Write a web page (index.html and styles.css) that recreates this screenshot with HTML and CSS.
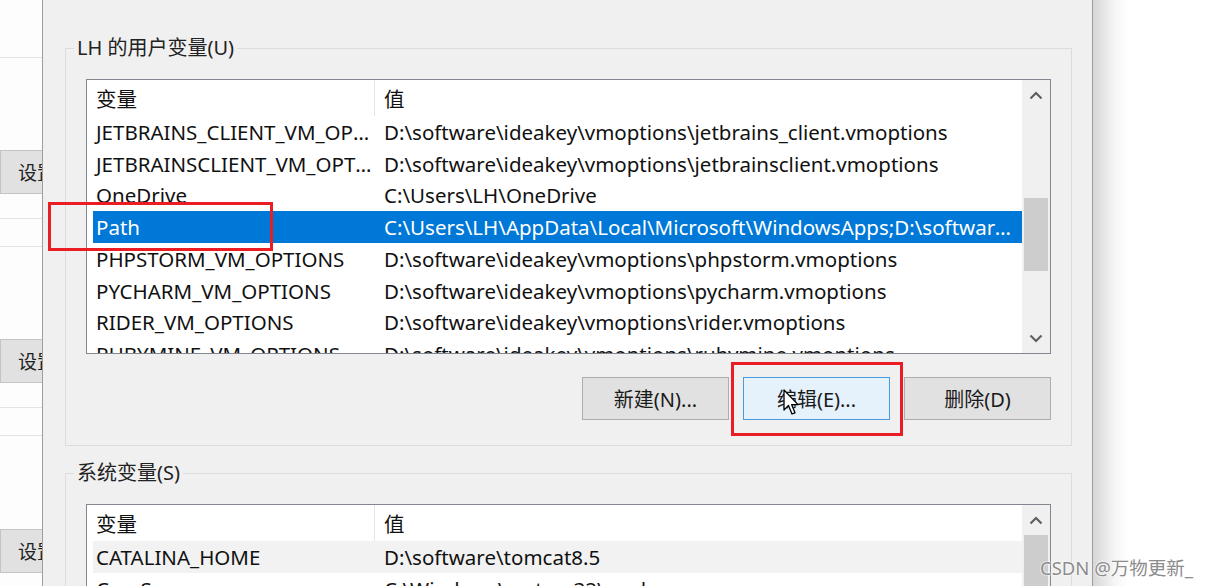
FILE: index.html
```html
<!DOCTYPE html>
<html lang="zh-CN">
<head>
    <meta charset="UTF-8">
    <title>环境变量</title>
    <link rel="stylesheet" href="styles.css">
</head>
<body>
<div class="screen">

    <div class="behind">
        <div class="rule r1"></div>
        <div class="bg_btn b1">设置</div>
        <div class="rule r2"></div>
        <div class="rule r3"></div>
        <div class="bg_btn b2">设置</div>
        <div class="rule r2"></div>
        <div class="rule r3"></div>
        <div class="bg_btn b3">设置</div>
    </div>

    <div class="dialog">
        <div class="group">
            <div class="group_title">LH 的用户变量(U)</div>
            <div class="list list_user">
                <div class="list_body">
                    <div class="row head">
                        <span class="col_name">变量</span>
                        <span class="col_val">值</span>
                    </div>
                    <div class="row">
                        <span class="col_name">JETBRAINS_CLIENT_VM_OPTIONS</span>
                        <span class="col_val">D:\software\ideakey\vmoptions\jetbrains_client.vmoptions</span>
                    </div>
                    <div class="row">
                        <span class="col_name">JETBRAINSCLIENT_VM_OPTIONS</span>
                        <span class="col_val">D:\software\ideakey\vmoptions\jetbrainsclient.vmoptions</span>
                    </div>
                    <div class="row">
                        <span class="col_name">OneDrive</span>
                        <span class="col_val">C:\Users\LH\OneDrive</span>
                    </div>
                    <div class="row selected">
                        <span class="col_name">Path</span>
                        <span class="col_val">C:\Users\LH\AppData\Local\Microsoft\WindowsApps;D:\software\Java\bin</span>
                    </div>
                    <div class="row">
                        <span class="col_name">PHPSTORM_VM_OPTIONS</span>
                        <span class="col_val">D:\software\ideakey\vmoptions\phpstorm.vmoptions</span>
                    </div>
                    <div class="row">
                        <span class="col_name">PYCHARM_VM_OPTIONS</span>
                        <span class="col_val">D:\software\ideakey\vmoptions\pycharm.vmoptions</span>
                    </div>
                    <div class="row">
                        <span class="col_name">RIDER_VM_OPTIONS</span>
                        <span class="col_val">D:\software\ideakey\vmoptions\rider.vmoptions</span>
                    </div>
                    <div class="row">
                        <span class="col_name">RUBYMINE_VM_OPTIONS</span>
                        <span class="col_val">D:\software\ideakey\vmoptions\rubymine.vmoptions</span>
                    </div>
                </div>
                <div class="scrollbar">
                    <div class="sb_btn">
                        <svg width="14" height="9" viewBox="0 0 14 9"><path d="M1.5 7.5 L7 2 L12.5 7.5" fill="none" stroke="#606060" stroke-width="2.2"/></svg>
                    </div>
                    <div class="sb_track">
                        <div class="thumb thumb_user"></div>
                    </div>
                    <div class="sb_btn">
                        <svg width="14" height="9" viewBox="0 0 14 9"><path d="M1.5 1.5 L7 7 L12.5 1.5" fill="none" stroke="#606060" stroke-width="2.2"/></svg>
                    </div>
                </div>
            </div>
            <div class="buttons">
                <div class="btn">新建(N)...</div>
                <div class="btn hover">编辑(E)...</div>
                <div class="btn">删除(D)</div>
            </div>
        </div>

        <div class="group group_sys">
            <div class="group_title">系统变量(S)</div>
            <div class="list list_sys">
                <div class="list_body">
                    <div class="row head">
                        <span class="col_name">变量</span>
                        <span class="col_val">值</span>
                    </div>
                    <div class="row soft">
                        <span class="col_name">CATALINA_HOME</span>
                        <span class="col_val">D:\software\tomcat8.5</span>
                    </div>
                    <div class="row">
                        <span class="col_name">ComSpec</span>
                        <span class="col_val">C:\Windows\system32\cmd.exe</span>
                    </div>
                </div>
                <div class="scrollbar">
                    <div class="sb_btn">
                        <svg width="14" height="9" viewBox="0 0 14 9"><path d="M1.5 7.5 L7 2 L12.5 7.5" fill="none" stroke="#606060" stroke-width="2.2"/></svg>
                    </div>
                    <div class="sb_track">
                        <div class="thumb thumb_sys"></div>
                    </div>
                </div>
            </div>
        </div>
    </div>

    <div class="shade"></div>
</div>

<!-- annotations drawn over the screenshot -->
<div class="mark mark_path"></div>
<div class="mark mark_edit"></div>
<svg class="cursor" width="18" height="28" viewBox="0 0 18 28">
    <path d="M1 1 L1 21 L5.5 16.5 L9 25 L12 23.8 L8.6 15.6 L15 15.6 Z" fill="#fff" stroke="#000" stroke-width="1.3" stroke-linejoin="round"/>
</svg>
<div class="watermark">CSDN @万物更新_</div>

</body>
</html>
```

FILE: styles.css
```css
* {
    margin: 0;
    padding: 0;
    box-sizing: border-box;
}
body {
    width: 1212px;
    height: 586px;
    overflow: hidden;
    background-color: #fff;
    font-family: "Noto Sans", "Noto Sans CJK SC", sans-serif;
    color: #111;
}
.screen {
    display: flex;
    height: 586px;
}

/* window behind the dialog */
.behind {
    width: 42px;
    flex-shrink: 0;
    overflow: hidden;
    background-color: #fdfdfd;
}
.rule {
    height: 1px;
    background-color: #e4e4e4;
}
.r1 { margin-top: 57px; }
.r2 { margin-top: 24px; }
.r3 { margin-top: 27px; }
.bg_btn {
    width: 70px;
    height: 44px;
    display: flex;
    align-items: center;
    padding-left: 17px;
    font-size: 19px;
    color: #222;
    background-color: #e1e1e1;
    border: 1px solid #c4c4c4;
}
.b1 { margin-top: 92px; }
.b2 { margin-top: 92px; }
.b3 { margin-top: 93px; }

/* dialog */
.dialog {
    width: 1051px;
    flex-shrink: 0;
    background-color: #f0f0f0;
    border-left: 1px solid #9e9e9e;
    border-right: 1px solid #9e9e9e;
    padding-left: 22px;
}
.group {
    width: 1007px;
    margin-top: 48px;
    border: 1px solid #dcdcdc;
    padding: 0 20px 25px 20px;
}
.group_sys {
    margin-top: 27px;
}
.group_title {
    width: fit-content;
    margin: -14px 0 0 -12px;
    padding: 0 3px;
    background-color: #f0f0f0;
    font-size: 20px;
    line-height: 26px;
    color: #222;
}
.list {
    display: flex;
    margin-top: 18px;
    width: 965px;
    height: 275px;
    background-color: #fff;
    border: 1px solid #828790;
}
.list_sys {
    height: 140px;
}
.list_body {
    flex: 1;
    overflow: hidden;
    padding-left: 6px;
}
.row {
    display: flex;
    height: 31.75px;
    align-items: center;
    font-size: 20.5px;
    white-space: nowrap;
}
.row.head {
    height: 36px;
}
.col_name {
    width: 282px;
    flex-shrink: 0;
    padding-left: 3px;
    overflow: hidden;
    text-overflow: ellipsis;
}
.col_val {
    flex: 1;
    padding-left: 9px;
    padding-right: 6px;
    overflow: hidden;
    text-overflow: ellipsis;
}
.head .col_name {
    height: 100%;
    display: flex;
    align-items: center;
    border-right: 1px solid #e5e5e5;
}
.selected {
    background-color: #0078d7;
    color: #fff;
}
.soft {
    background-color: #f2f2f2;
}

/* scrollbar */
.scrollbar {
    width: 28px;
    flex-shrink: 0;
    display: flex;
    flex-flow: column;
    background-color: #f0f0f0;
}
.sb_btn {
    height: 30px;
    flex-shrink: 0;
    display: flex;
    align-items: center;
    justify-content: center;
}
.sb_track {
    flex: 1;
    min-height: 0;
}
.thumb {
    margin: 0 2px;
    background-color: #cdcdcd;
}
.thumb_user {
    margin-top: 88px;
    height: 73px;
}
.thumb_sys {
    height: 100px;
}

/* buttons */
.buttons {
    display: flex;
    justify-content: flex-end;
    gap: 14px;
    margin-top: 23px;
}
.btn {
    width: 147px;
    height: 43px;
    display: flex;
    align-items: center;
    justify-content: center;
    font-size: 20px;
    color: #1a1a1a;
    background-color: #e1e1e1;
    border: 1px solid #adadad;
}
.btn.hover {
    background-color: #e5f1fb;
    border-color: #4a9ade;
}

.shade {
    flex: 1;
    background: linear-gradient(to right, #d6d6d6, #f6f6f6 22px, #fff 36px);
}

/* overlays */
.mark {
    position: absolute;
    border: 3px solid #ea1c24;
}
.mark_path {
    left: 48px;
    top: 202px;
    width: 225px;
    height: 49px;
}
.mark_edit {
    left: 731px;
    top: 362px;
    width: 172px;
    height: 74px;
}
.cursor {
    position: absolute;
    left: 783px;
    top: 389px;
}
.watermark {
    position: absolute;
    left: 1040px;
    top: 554px;
    font-size: 18.5px;
    color: #8c8c8c;
    text-shadow: 0 0 2px #fff, 0 0 2px #fff;
    white-space: nowrap;
}
```
